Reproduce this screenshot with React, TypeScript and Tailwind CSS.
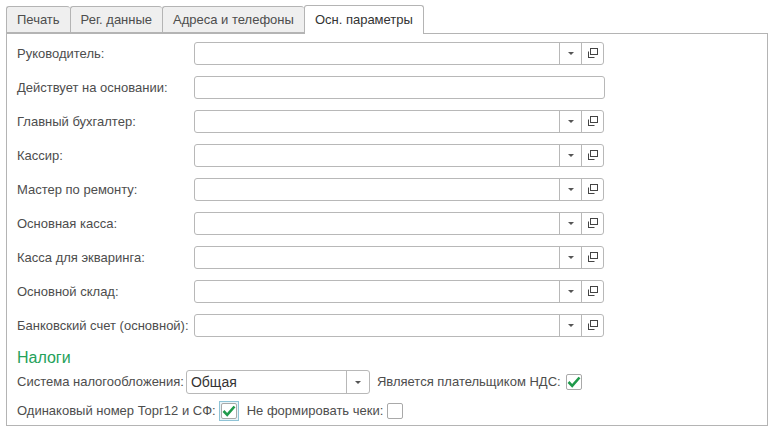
import React from "react"

const font = { fontFamily: '"Liberation Sans", Arial, sans-serif' }

const tabs = ["Печать", "Рег. данные", "Адреса и телефоны", "Осн. параметры"]

const fields = [
  { label: "Руководитель:", kind: "ref" },
  { label: "Действует на основании:", kind: "text" },
  { label: "Главный бухгалтер:", kind: "ref" },
  { label: "Кассир:", kind: "ref" },
  { label: "Мастер по ремонту:", kind: "ref" },
  { label: "Основная касса:", kind: "ref" },
  { label: "Касса для экваринга:", kind: "ref" },
  { label: "Основной склад:", kind: "ref" },
  { label: "Банковский счет (основной):", kind: "ref" },
]

function Arrow() {
  return (
    <svg width="6" height="3" viewBox="0 0 6 3">
      <path d="M0 0 H6 L3 3 Z" fill="#555" />
    </svg>
  )
}

function OpenIcon() {
  return (
    <svg width="11" height="11" viewBox="0 0 11 11" fill="none" stroke="#444" strokeWidth="1">
      <rect x="3.5" y="0.5" width="7" height="6" />
      <path d="M1.5 3.5 V9.5 H7.5" />
      <path d="M1 9.5 H2" />
    </svg>
  )
}

function Check({ checked, focused }: { checked: boolean; focused?: boolean }) {
  const box = (
    <div className="w-[16px] h-[16px] border border-[#a9a9a9] rounded-[2px] bg-white flex items-center justify-center">
      {checked && (
        <svg width="14" height="12" viewBox="0 0 14 12">
          <path d="M1.5 6 L5.2 9.8 L12.5 1.5" fill="none" stroke="#1f9a4b" strokeWidth="2.6" />
        </svg>
      )}
    </div>
  )
  if (focused) {
    return <div className="p-px border border-[#8fc3d6] bg-[#e8f4f8]">{box}</div>
  }
  return box
}

export default function App() {
  return (
    <div className="w-[772px] h-[433px] bg-white text-[13px] text-[#4d4d4d] overflow-hidden" style={font}>
      {/* вкладки */}
      <div className="flex items-end pl-[6px] pt-[4px] h-[33px]">
        {tabs.map((t, i) => {
          const active = i === tabs.length - 1
          return (
            <div
              key={t}
              className={
                active
                  ? "relative z-10 h-[29px] px-[10px] flex items-center bg-white border border-b-0 border-[#b4b4b4] rounded-t-[3px] text-[#333] -mb-px"
                  : "h-[27px] px-[10px] flex items-center bg-[#efefef] border border-r-0 border-[#b4b4b4] rounded-t-[3px] pt-px"
              }
            >
              {t}
            </div>
          )
        })}
      </div>

      {/* панель */}
      <div className="ml-[6px] w-[762px] h-[393px] border border-[#b4b4b4] bg-white pl-[10px] pt-[8px] flex flex-col">
        <div className="flex flex-col gap-[11px]">
          {fields.map((f) => (
            <div key={f.label} className="flex items-center h-[23px]">
              <div className="w-[177px]">{f.label}</div>
              {f.kind === "ref" ? (
                <div className="w-[410px] h-[23px] border border-[#b8b8b8] rounded-[3px] flex">
                  <div className="flex-1" />
                  <div className="w-[22px] border-l border-[#b8b8b8] flex items-center justify-center">
                    <Arrow />
                  </div>
                  <div className="w-[22px] border-l border-[#b8b8b8] flex items-center justify-center">
                    <OpenIcon />
                  </div>
                </div>
              ) : (
                <div className="w-[411px] h-[23px] border border-[#b8b8b8] rounded-[3px]" />
              )}
            </div>
          ))}
        </div>

        <div className="mt-[11px] text-[16px] leading-[20px] text-[#24a15a]">Налоги</div>

        <div className="flex items-center h-[24px] mt-[2px]">
          <div className="mr-[2px]">Система налогообложения:</div>
          <div className="w-[184px] h-[24px] border border-[#b8b8b8] rounded-[3px] flex">
            <div className="flex-1 pl-[4px] flex items-center text-[#333] text-[14px]">Общая</div>
            <div className="w-[23px] border-l border-[#b8b8b8] flex items-center justify-center">
              <Arrow />
            </div>
          </div>
          <div className="ml-[7px] mr-[5px]">Является плательщиком НДС:</div>
          <Check checked />
        </div>

        <div className="flex items-center h-[22px] mt-[6px]">
          <div className="mr-[3px]">Одинаковый номер Торг12 и СФ:</div>
          <Check checked focused />
          <div className="ml-[8px] mr-[4px]">Не формировать чеки:</div>
          <Check checked={false} />
        </div>
      </div>
    </div>
  )
}
